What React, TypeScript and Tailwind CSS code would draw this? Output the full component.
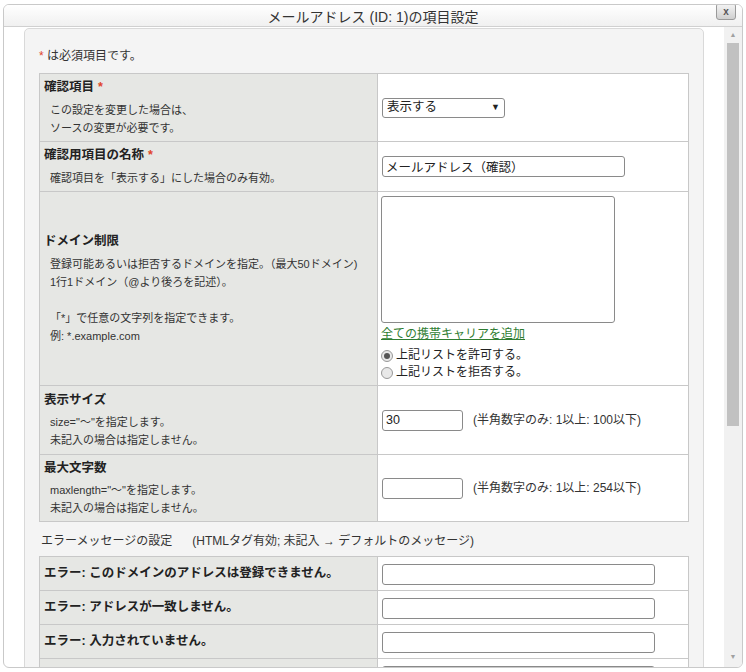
import React from 'react';

const FONT = { fontFamily: '"Liberation Sans", "Noto Sans CJK JP", sans-serif' };

function Req() {
  return <span className="ml-1 text-[#e0442a]">*</span>;
}

function Label({ title, req, lines }: { title: string; req?: boolean; lines: string[] }) {
  return (
    <td className="w-[338px] border border-[#c8c8c8] bg-[#e6e7e4] px-[4px] align-middle">
      <div className="text-[12.5px] font-bold text-[#222]">
        {title}
        {req && <Req />}
      </div>
      <div className="mt-[4px] pl-[6px] text-[11px] leading-[18px] text-[#333]">
        {lines.map((l, i) => (
          <div key={i}>{l || '\u00a0'}</div>
        ))}
      </div>
    </td>
  );
}

function Input({ w, value }: { w: string; value?: string }) {
  return (
    <input
      readOnly
      value={value ?? ''}
      className={`${w} h-[21px] rounded-[3px] border border-[#8a8a8a] bg-white px-[3px] text-[12.5px] text-[#222]`}
    />
  );
}

function Radio({ on, label }: { on?: boolean; label: string }) {
  return (
    <div className="flex items-center gap-[3px] text-[12px] leading-[17px] text-[#222]">
      <span className="flex h-[12px] w-[12px] items-center justify-center rounded-full border border-[#999] bg-[#e8e8e8]">
        {on && <span className="h-[6px] w-[6px] rounded-full bg-[#555]" />}
      </span>
      {label}
    </div>
  );
}

export default function App() {
  return (
    <div style={FONT} className="h-[672px] w-[746px] overflow-hidden bg-white pt-[4px]">
      <div className="relative mx-[3px] h-[664px] overflow-hidden rounded-[6px] border border-[#c9c9c9] bg-white">
        <div className="h-[22px] border-b border-[#d0d0d0] bg-gradient-to-b from-white to-[#f0f0f0] text-center text-[14px] leading-[24px] text-[#333]">
          メールアドレス (ID: 1)の項目設定
        </div>
        <div className="absolute right-[6px] top-[-2px] flex h-[17px] w-[20px] items-center justify-center rounded-[3px] border border-[#9a9a9a] bg-gradient-to-b from-[#f5f5f5] to-[#cfcfcf] text-[10px] font-bold text-[#555]">
          x
        </div>
        <div className="flex h-[640px]">
          <div className="flex-1 overflow-hidden px-[20px] pt-[1px]">
            <div className="h-[700px] rounded-[5px] border border-[#d9d9d9] bg-[#f4f4f4] px-[14px] pt-[18px]">
              <div className="mb-[8px] text-[12px] text-[#333]">
                <span className="text-[#e0442a]">*</span> は必須項目です。
              </div>
              <table className="w-full border-collapse border border-[#c8c8c8] bg-white">
                <tbody>
                  <tr className="h-[68px]">
                    <Label title="確認項目" req lines={['この設定を変更した場合は、', 'ソースの変更が必要です。']} />
                    <td className="border border-[#c8c8c8] px-[4px]">
                      <div className="flex h-[20px] w-[123px] items-center justify-between rounded-[3px] border border-[#8a8a8a] bg-white px-[4px] text-[12.5px] text-[#222]">
                        表示する<span className="text-[9px]">▼</span>
                      </div>
                    </td>
                  </tr>
                  <tr className="h-[50px]">
                    <Label title="確認用項目の名称" req lines={['確認項目を「表示する」にした場合のみ有効。']} />
                    <td className="border border-[#c8c8c8] px-[4px]">
                      <Input w="w-[243px]" value="メールアドレス（確認）" />
                    </td>
                  </tr>
                  <tr className="h-[194px]">
                    <Label
                      title="ドメイン制限"
                      lines={[
                        '登録可能あるいは拒否するドメインを指定。（最大50ドメイン)',
                        '1行1ドメイン（@より後ろを記述）。',
                        '',
                        '「*」で任意の文字列を指定できます。',
                        '例: *.example.com',
                      ]}
                    />
                    <td className="border border-[#c8c8c8] px-[3px] pt-[4px] align-top">
                      <div className="h-[127px] w-[234px] rounded-[3px] border border-[#8a8a8a] bg-white" />
                      <div className="mt-[2px] text-[12px] text-[#2f7d32] underline">全ての携帯キャリアを追加</div>
                      <div className="mt-[4px]">
                        <Radio on label="上記リストを許可する。" />
                        <Radio label="上記リストを拒否する。" />
                      </div>
                    </td>
                  </tr>
                  <tr className="h-[69px]">
                    <Label title="表示サイズ" lines={['size="～"を指定します。', '未記入の場合は指定しません。']} />
                    <td className="border border-[#c8c8c8] px-[4px]">
                      <div className="flex items-center gap-[10px]">
                        <Input w="w-[81px]" value="30" />
                        <span className="text-[12px] text-[#333]">(半角数字のみ: 1以上: 100以下)</span>
                      </div>
                    </td>
                  </tr>
                  <tr className="h-[67px]">
                    <Label title="最大文字数" lines={['maxlength="～"を指定します。', '未記入の場合は指定しません。']} />
                    <td className="border border-[#c8c8c8] px-[4px]">
                      <div className="flex items-center gap-[10px]">
                        <Input w="w-[81px]" />
                        <span className="text-[12px] text-[#333]">(半角数字のみ: 1以上: 254以下)</span>
                      </div>
                    </td>
                  </tr>
                </tbody>
              </table>
              <div className="mb-[6px] mt-[10px] text-[12px] text-[#333]">
                <span className="ml-[2px]">エラーメッセージの設定</span>
                <span className="ml-[20px]">(HTMLタグ有効; 未記入 → デフォルトのメッセージ)</span>
              </div>
              <table className="w-full border-collapse border border-[#c8c8c8] bg-white">
                <tbody>
                  {['エラー: このドメインのアドレスは登録できません。', 'エラー: アドレスが一致しません。', 'エラー: 入力されていません。', ''].map((t, i) => (
                    <tr key={i} className="h-[34px]">
                      <td className="w-[338px] border border-[#c8c8c8] bg-[#e6e7e4] px-[4px] text-[12.5px] font-bold text-[#222]">{t}</td>
                      <td className="border border-[#c8c8c8] px-[4px]">
                        <Input w="w-[273px]" />
                      </td>
                    </tr>
                  ))}
                </tbody>
              </table>
            </div>
          </div>
          <div className="flex w-[18px] flex-col items-center bg-[#f1f1f1] pb-[2px]">
            <div className="flex h-[16px] items-center text-[7px] text-[#a0a0a0]">▲</div>
            <div className="h-[383px] w-[12px] bg-[#c1c1c1]" />
            <div className="flex-1" />
            <div className="flex h-[16px] items-center text-[7px] text-[#a0a0a0]">▼</div>
          </div>
        </div>
      </div>
    </div>
  );
}
